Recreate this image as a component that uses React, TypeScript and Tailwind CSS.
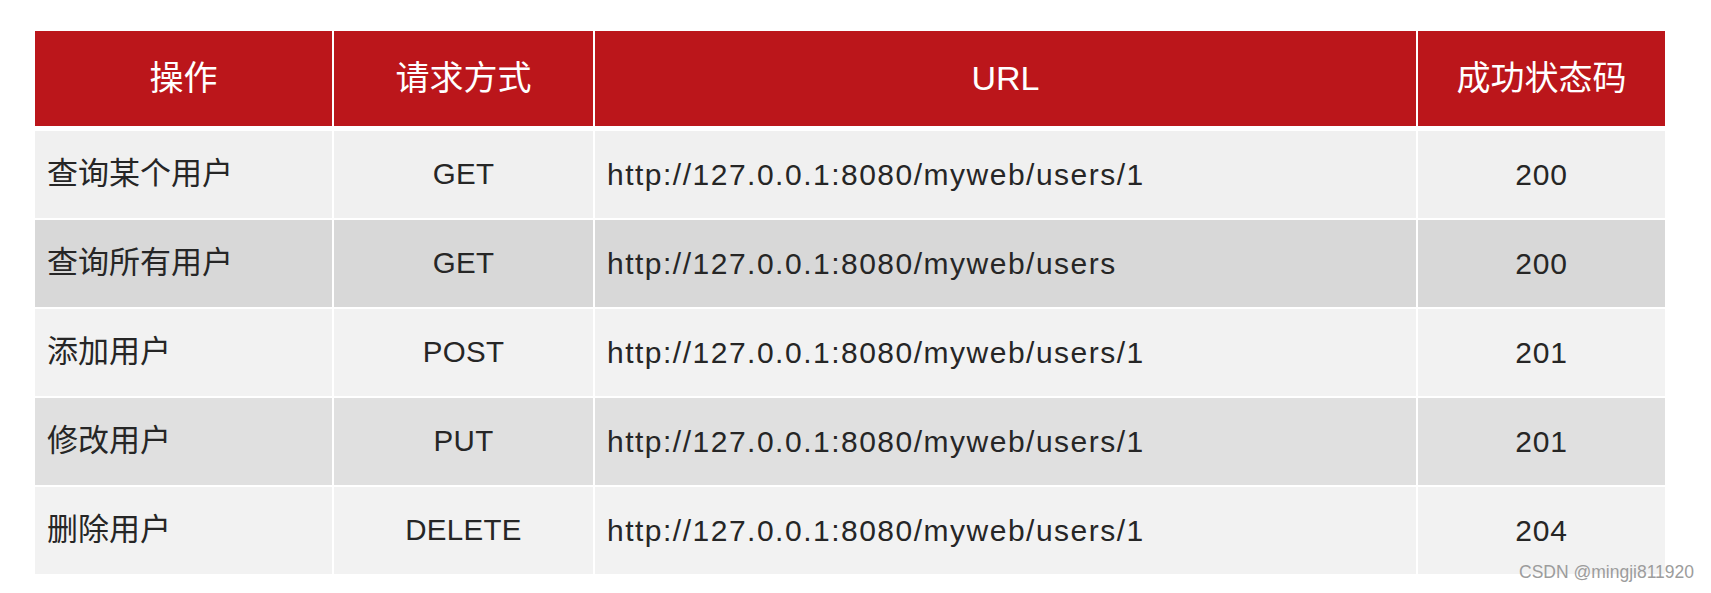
import React from 'react';

interface ApiRow {
  action: string;
  method: string;
  url: string;
  status: string;
  bg: string;
}

const rows: ApiRow[] = [
  { action: '查询某个用户', method: 'GET', url: 'http://127.0.0.1:8080/myweb/users/1', status: '200', bg: 'bg-[#f0f0f0]' },
  { action: '查询所有用户', method: 'GET', url: 'http://127.0.0.1:8080/myweb/users', status: '200', bg: 'bg-[#d8d8d8]' },
  { action: '添加用户', method: 'POST', url: 'http://127.0.0.1:8080/myweb/users/1', status: '201', bg: 'bg-[#f2f2f2]' },
  { action: '修改用户', method: 'PUT', url: 'http://127.0.0.1:8080/myweb/users/1', status: '201', bg: 'bg-[#e0e0e0]' },
  { action: '删除用户', method: 'DELETE', url: 'http://127.0.0.1:8080/myweb/users/1', status: '204', bg: 'bg-[#f2f2f2]' },
];

const headers = ['操作', '请求方式', 'URL', '成功状态码'];

// same column template for header and body rows
const cols = 'grid grid-cols-[297px_259px_821px_247px] gap-x-[2px]';

export default function App() {
  return (
    <div
      className="relative w-[1711px] h-[593px] bg-white overflow-hidden"
      style={{ fontFamily: '"Liberation Sans", "Noto Sans CJK SC", sans-serif' }}
    >
      <div className="pt-[31px] pl-[35px] flex flex-col gap-y-[2px]">
        <div className={`${cols} h-[95px] mb-[3px]`}>
          {headers.map((h) => (
            <div
              key={h}
              className="bg-[#bb161b] text-white text-[34px] flex items-center justify-center"
            >
              {h}
            </div>
          ))}
        </div>

        {rows.map((r, i) => (
          <div key={i} className={`${cols} h-[87px] text-[#262626]`}>
            <div className={`${r.bg} flex items-center pl-[12px] text-[31px]`}>{r.action}</div>
            <div className={`${r.bg} flex items-center justify-center text-[29.5px] tracking-[0.3px]`}>{r.method}</div>
            <div className={`${r.bg} flex items-center pl-[12px] text-[30px] tracking-[1.5px]`}>{r.url}</div>
            <div className={`${r.bg} flex items-center justify-center text-[30px] tracking-[0.8px]`}>{r.status}</div>
          </div>
        ))}
      </div>

      <div className="absolute left-[1519px] top-[564px] text-[17.5px] leading-none text-[#9c9c9c]">
        CSDN @mingji811920
      </div>
    </div>
  );
}
